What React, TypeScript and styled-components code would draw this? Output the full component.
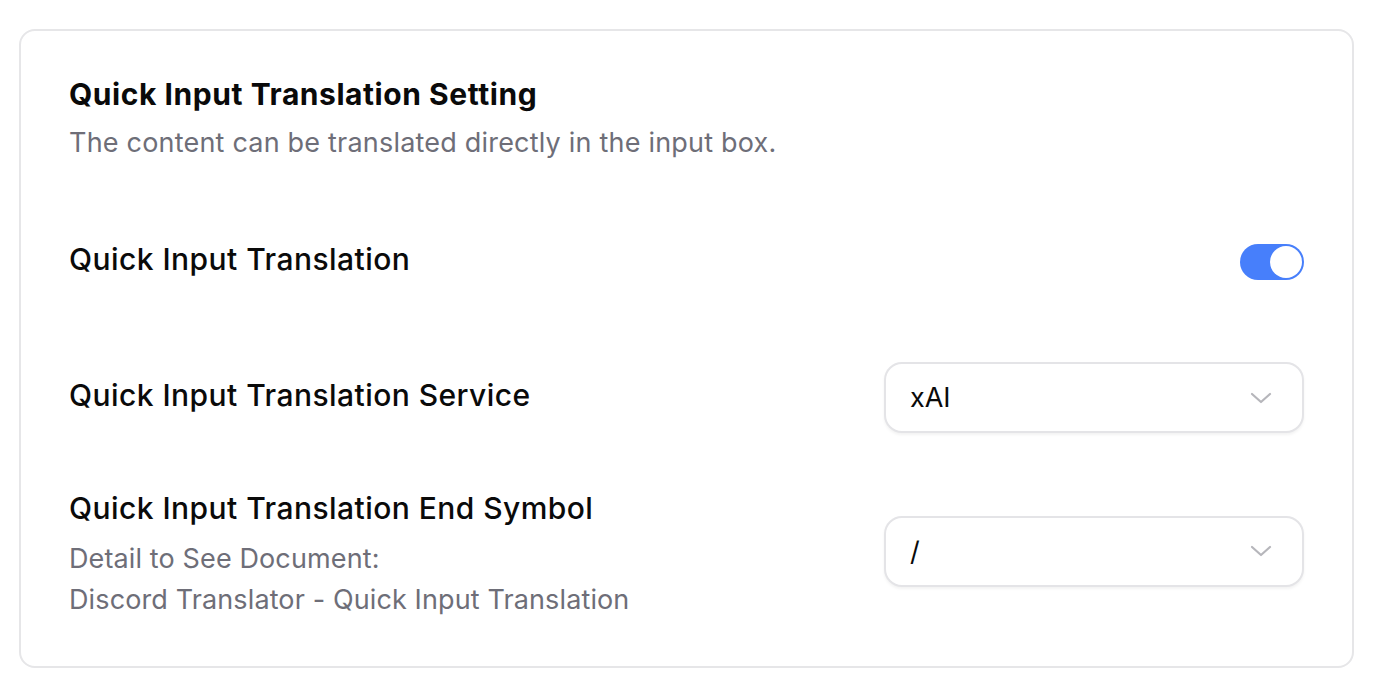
import React from "react";
import styled, { createGlobalStyle } from "styled-components";

const GlobalStyle = createGlobalStyle`
  html, body { margin: 0; padding: 0; background: #ffffff; }
  body { font-family: Inter, "Noto Sans", "Liberation Sans", sans-serif; -webkit-font-smoothing: antialiased; }
  * { box-sizing: border-box; }
`;

const Page = styled.div`
  padding: 29px 42px 27px 19px;
`;

const Card = styled.section`
  border: 2px solid #e6e6e8;
  border-radius: 16px;
  padding: 43px 48px 46px 48px;
  background: #fff;
`;

const Header = styled.header`
  display: flex;
  flex-direction: column;
  gap: 9px;
`;

const Title = styled.h2`
  margin: 0;
  font-size: 30px;
  line-height: 40px;
  font-weight: 700;
  color: #0a0a0a;
  letter-spacing: 0.55px;
`;

const Subtitle = styled.p`
  margin: 0;
  font-size: 27px;
  line-height: 40px;
  color: #6e6e78;
  letter-spacing: 0.2px;
`;

const Row = styled.div<{ $top: number }>`
  display: flex;
  align-items: center;
  justify-content: space-between;
  margin-top: ${(p) => p.$top}px;
`;

const LabelBlock = styled.div`
  display: flex;
  flex-direction: column;
`;

const Label = styled.div`
  font-size: 30px;
  line-height: 40px;
  font-weight: 500;
  color: #0a0a0a;
  letter-spacing: 0.45px;
`;

const Desc = styled.div<{ $first?: boolean }>`
  font-size: 27px;
  line-height: 41px;
  color: #6e6e78;
  letter-spacing: 0.12px;
  margin-top: ${(p) => (p.$first ? 10 : 0)}px;
`;

const Switch = styled.div<{ $on: boolean }>`
  width: 64px;
  height: 36px;
  border-radius: 18px;
  background: ${(p) => (p.$on ? "#477ffb" : "#d9d9de")};
  display: flex;
  align-items: center;
  justify-content: ${(p) => (p.$on ? "flex-end" : "flex-start")};
  padding: 2px;
  margin-top: 7px;
`;

const Knob = styled.div`
  width: 32px;
  height: 32px;
  border-radius: 50%;
  background: #fff;
`;

const Select = styled.div<{ $shift: number }>`
  width: 420px;
  height: 71px;
  border: 2px solid #e4e4e7;
  border-radius: 18px;
  box-shadow: 0 2px 3px rgba(0, 0, 0, 0.05);
  display: flex;
  align-items: center;
  justify-content: space-between;
  padding: 0 30px 0 24px;
  background: #fff;
  margin-top: ${(p) => (p.$shift > 0 ? p.$shift * 2 : 0)}px;
  margin-bottom: ${(p) => (p.$shift < 0 ? -p.$shift * 2 : 0)}px;
`;

const SelectValue = styled.span`
  font-size: 27px;
  color: #0a0a0a;
`;

const Chevron = () => (
  <svg width="22" height="12" viewBox="0 0 22 12" fill="none">
    <path d="M2 2 L11 10 L20 2" stroke="#b6b6bb" strokeWidth="2.2" strokeLinecap="round" strokeLinejoin="round" />
  </svg>
);

export default function App() {
  return (
    <>
      <GlobalStyle />
      <Page>
        <Card>
          <Header>
            <Title>Quick Input Translation Setting</Title>
            <Subtitle>The content can be translated directly in the input box.</Subtitle>
          </Header>
          <Row $top={74}>
            <Label>Quick Input Translation</Label>
            <Switch $on>
              <Knob />
            </Switch>
          </Row>
          <Row $top={76}>
            <Label>Quick Input Translation Service</Label>
            <Select $shift={3}>
              <SelectValue>xAI</SelectValue>
              <Chevron />
            </Select>
          </Row>
          <Row $top={55}>
            <LabelBlock>
              <Label>Quick Input Translation End Symbol</Label>
              <Desc $first>Detail to See Document:</Desc>
              <Desc>Discord Translator - Quick Input Translation</Desc>
            </LabelBlock>
            <Select $shift={-3}>
              <SelectValue>/</SelectValue>
              <Chevron />
            </Select>
          </Row>
        </Card>
      </Page>
    </>
  );
}
